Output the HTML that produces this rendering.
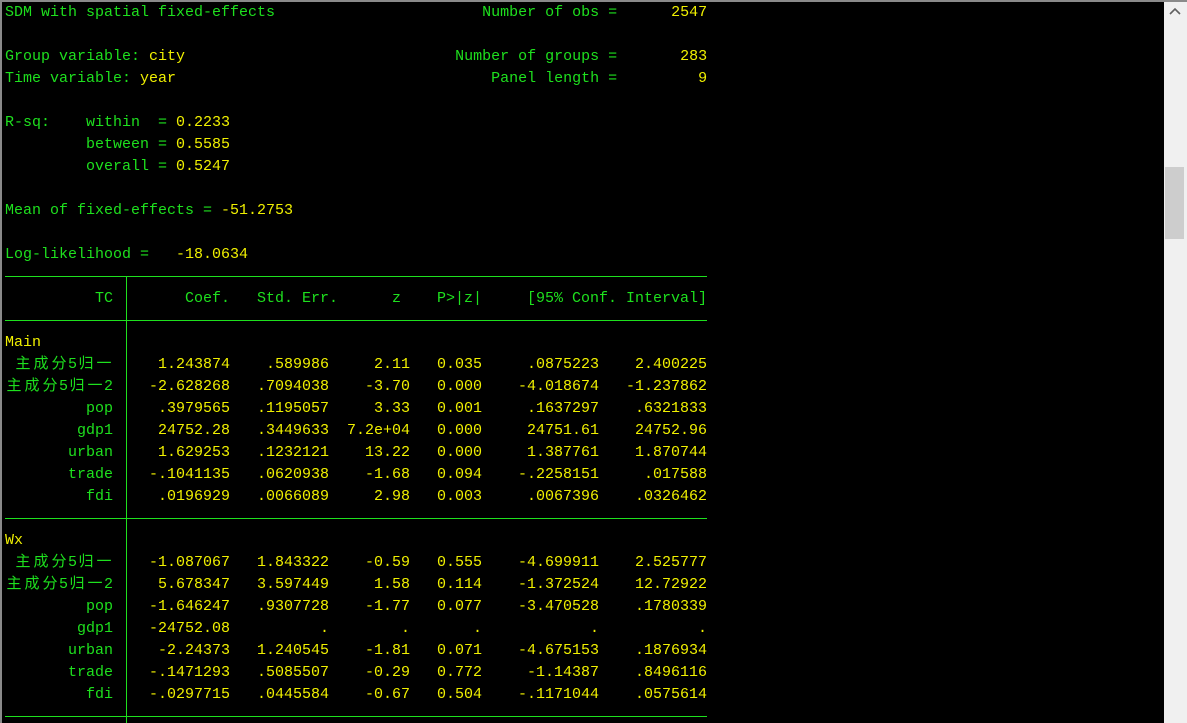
<!DOCTYPE html>
<html><head><meta charset="utf-8"><style>
html,body{margin:0;padding:0;background:#000;width:1187px;height:723px;overflow:hidden}
#w{position:absolute;left:0;top:0;width:1187px;height:723px;background:#000}
.r{position:absolute;left:5px;height:22px;line-height:22px;font-family:"Liberation Mono","Noto Sans CJK SC",monospace;font-size:15px;white-space:pre;color:#1ee01e;margin-top:1px}
.y{color:#f0f000}
.c{display:inline-block;text-align:right;vertical-align:top}
.l{width:108px}.g{width:18px}.c1{width:99px}.c2{width:99px}.c3{width:81px}.c4{width:72px}.c5{width:117px}.c6{width:108px}
.k{display:inline-block;width:18px;text-align:center}
.h{position:absolute;left:5px;width:702px;height:1px;background:#1ee01e}
.v{position:absolute;left:126px;top:276px;width:1px;height:447px;background:#1ee01e}
</style></head><body><div id="w">
<div style="position:absolute;left:0;top:0;width:1187px;height:2px;background:#8a8a8a"></div>
<div style="position:absolute;left:0;top:0;width:2px;height:723px;background:#8a8a8a"></div>
<div style="position:absolute;left:1164px;top:2px;width:23px;height:721px;background:#f0f0f0"></div>
<div style="position:absolute;left:1165px;top:167px;width:19px;height:72px;background:#cdcdcd"></div>
<svg style="position:absolute;left:1168px;top:6px" width="14" height="10"><path d="M2 8 L7 3 L12 8" fill="none" stroke="#606060" stroke-width="1.6"/></svg>

<div class="r" style="top:1px">SDM with spatial fixed-effects                       Number of obs =      <span class="y">2547</span></div>
<div class="r" style="top:45px">Group variable: <span class="y">city</span>                              Number of groups =       <span class="y">283</span></div>
<div class="r" style="top:67px">Time variable: <span class="y">year</span>                                   Panel length =         <span class="y">9</span></div>
<div class="r" style="top:111px">R-sq:    within  = <span class="y">0.2233</span></div>
<div class="r" style="top:133px">         between = <span class="y">0.5585</span></div>
<div class="r" style="top:155px">         overall = <span class="y">0.5247</span></div>
<div class="r" style="top:199px">Mean of fixed-effects = <span class="y">-51.2753</span></div>
<div class="r" style="top:243px">Log-likelihood =   <span class="y">-18.0634</span></div>
<div class="h" style="top:276px"></div>
<div class="r" style="top:287px"><span class="c l">TC</span><span class="c g"></span><span class="c c1">Coef.</span><span class="c" style="width:108px">Std. Err.</span><span class="c" style="width:63px">z</span><span class="c" style="width:81px">P&gt;|z|</span><span class="c" style="width:225px">[95% Conf. Interval]</span></div>
<div class="h" style="top:320px"></div>
<div class="r y" style="top:331px">Main</div>

<div class="r" style="top:353px"><span class="c l"><span class="k">主</span><span class="k">成</span><span class="k">分</span>5<span class="k">归</span><span class="k">一</span></span><span class="c g"></span><span class="y"><span class="c c1">1.243874</span><span class="c c2">.589986</span><span class="c c3">2.11</span><span class="c c4">0.035</span><span class="c c5">.0875223</span><span class="c c6">2.400225</span></span></div>
<div class="r" style="top:375px"><span class="c l"><span class="k">主</span><span class="k">成</span><span class="k">分</span>5<span class="k">归</span><span class="k">一</span>2</span><span class="c g"></span><span class="y"><span class="c c1">-2.628268</span><span class="c c2">.7094038</span><span class="c c3">-3.70</span><span class="c c4">0.000</span><span class="c c5">-4.018674</span><span class="c c6">-1.237862</span></span></div>
<div class="r" style="top:397px"><span class="c l">pop</span><span class="c g"></span><span class="y"><span class="c c1">.3979565</span><span class="c c2">.1195057</span><span class="c c3">3.33</span><span class="c c4">0.001</span><span class="c c5">.1637297</span><span class="c c6">.6321833</span></span></div>
<div class="r" style="top:419px"><span class="c l">gdp1</span><span class="c g"></span><span class="y"><span class="c c1">24752.28</span><span class="c c2">.3449633</span><span class="c c3">7.2e+04</span><span class="c c4">0.000</span><span class="c c5">24751.61</span><span class="c c6">24752.96</span></span></div>
<div class="r" style="top:441px"><span class="c l">urban</span><span class="c g"></span><span class="y"><span class="c c1">1.629253</span><span class="c c2">.1232121</span><span class="c c3">13.22</span><span class="c c4">0.000</span><span class="c c5">1.387761</span><span class="c c6">1.870744</span></span></div>
<div class="r" style="top:463px"><span class="c l">trade</span><span class="c g"></span><span class="y"><span class="c c1">-.1041135</span><span class="c c2">.0620938</span><span class="c c3">-1.68</span><span class="c c4">0.094</span><span class="c c5">-.2258151</span><span class="c c6">.017588</span></span></div>
<div class="r" style="top:485px"><span class="c l">fdi</span><span class="c g"></span><span class="y"><span class="c c1">.0196929</span><span class="c c2">.0066089</span><span class="c c3">2.98</span><span class="c c4">0.003</span><span class="c c5">.0067396</span><span class="c c6">.0326462</span></span></div>
<div class="h" style="top:518px"></div>
<div class="r y" style="top:529px">Wx</div>
<div class="r" style="top:551px"><span class="c l"><span class="k">主</span><span class="k">成</span><span class="k">分</span>5<span class="k">归</span><span class="k">一</span></span><span class="c g"></span><span class="y"><span class="c c1">-1.087067</span><span class="c c2">1.843322</span><span class="c c3">-0.59</span><span class="c c4">0.555</span><span class="c c5">-4.699911</span><span class="c c6">2.525777</span></span></div>
<div class="r" style="top:573px"><span class="c l"><span class="k">主</span><span class="k">成</span><span class="k">分</span>5<span class="k">归</span><span class="k">一</span>2</span><span class="c g"></span><span class="y"><span class="c c1">5.678347</span><span class="c c2">3.597449</span><span class="c c3">1.58</span><span class="c c4">0.114</span><span class="c c5">-1.372524</span><span class="c c6">12.72922</span></span></div>
<div class="r" style="top:595px"><span class="c l">pop</span><span class="c g"></span><span class="y"><span class="c c1">-1.646247</span><span class="c c2">.9307728</span><span class="c c3">-1.77</span><span class="c c4">0.077</span><span class="c c5">-3.470528</span><span class="c c6">.1780339</span></span></div>
<div class="r" style="top:617px"><span class="c l">gdp1</span><span class="c g"></span><span class="y"><span class="c c1">-24752.08</span><span class="c c2">.</span><span class="c c3">.</span><span class="c c4">.</span><span class="c c5">.</span><span class="c c6">.</span></span></div>
<div class="r" style="top:639px"><span class="c l">urban</span><span class="c g"></span><span class="y"><span class="c c1">-2.24373</span><span class="c c2">1.240545</span><span class="c c3">-1.81</span><span class="c c4">0.071</span><span class="c c5">-4.675153</span><span class="c c6">.1876934</span></span></div>
<div class="r" style="top:661px"><span class="c l">trade</span><span class="c g"></span><span class="y"><span class="c c1">-.1471293</span><span class="c c2">.5085507</span><span class="c c3">-0.29</span><span class="c c4">0.772</span><span class="c c5">-1.14387</span><span class="c c6">.8496116</span></span></div>
<div class="r" style="top:683px"><span class="c l">fdi</span><span class="c g"></span><span class="y"><span class="c c1">-.0297715</span><span class="c c2">.0445584</span><span class="c c3">-0.67</span><span class="c c4">0.504</span><span class="c c5">-.1171044</span><span class="c c6">.0575614</span></span></div>
<div class="h" style="top:716px"></div>
<div class="v"></div>
</div></body></html>
